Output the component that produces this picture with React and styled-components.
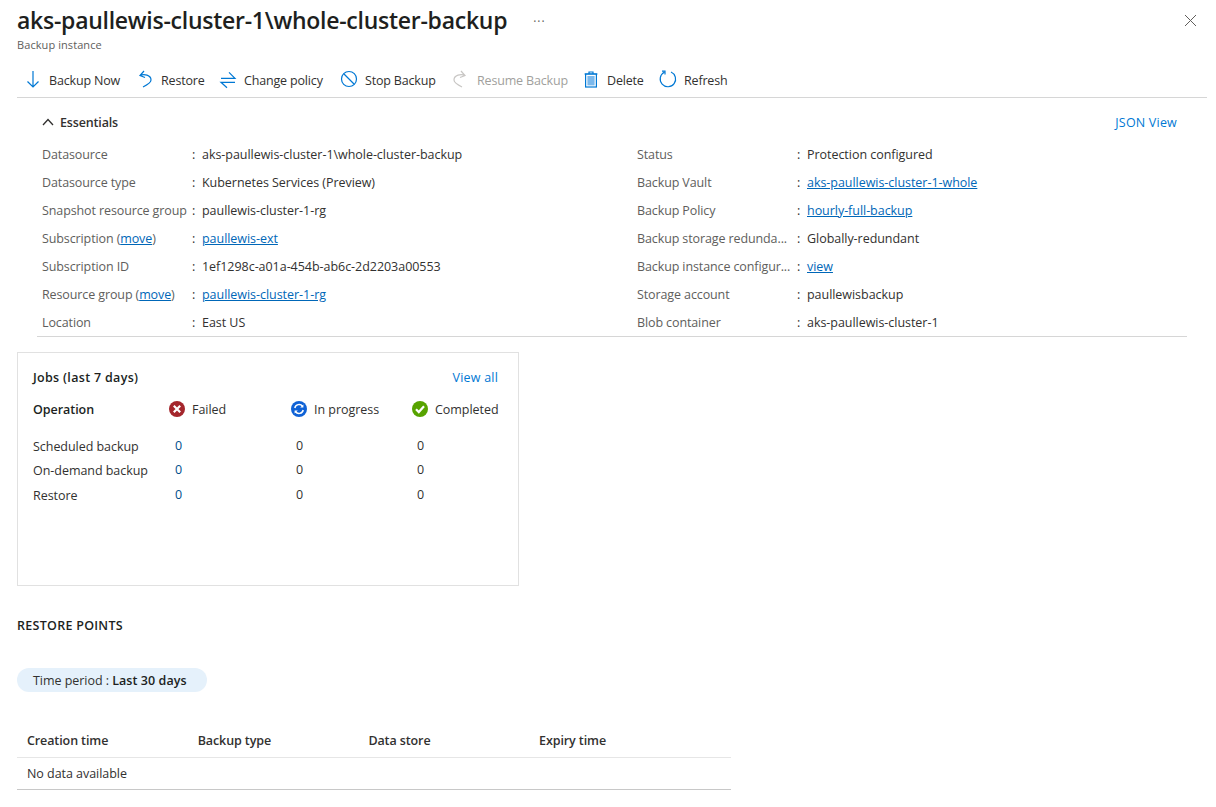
import React from 'react';
import styled, { createGlobalStyle } from 'styled-components';

const GlobalStyle = createGlobalStyle`
  html, body { margin: 0; padding: 0; background: #fff; }
  body {
    font-family: "Open Sans", "Noto Sans", "Liberation Sans", sans-serif;
    font-size: 12.5px;
    letter-spacing: -0.04px;
    color: #323130;
  }
`;

const BLUE = '#0078d4';
const LINK = '#0067b8';

const Page = styled.div`
  width: 1216px;
  height: 807px;
  overflow: hidden;
  box-sizing: border-box;
  padding: 0 9px 0 17px;
`;

const Header = styled.header`
  height: 63px;
  display: flex;
  align-items: flex-start;
`;

const TitleBlock = styled.div`
  display: flex;
  flex-direction: column;
`;

const TitleRow = styled.div`
  display: flex;
  align-items: center;
  height: 38px;
  padding-top: 2px;
  box-sizing: border-box;
`;

const Title = styled.h1`
  margin: 0;
  font-size: 23px;
  font-weight: 600;
  letter-spacing: -0.26px;
  color: #201f1e;
  white-space: nowrap;
`;

const More = styled.span`
  margin-left: 26px;
  font-size: 12px;
  letter-spacing: 1px;
  color: #605e5c;
  position: relative;
  top: 1px;
`;

const Subtitle = styled.div`
  font-size: 11px;
  letter-spacing: 0.08px;
  color: #605e5c;
  margin-top: -1px;
`;

const CloseButton = styled.button`
  margin-left: auto;
  margin-right: 10px;
  margin-top: 14px;
  padding: 0;
  border: 0;
  background: none;
  display: flex;
`;

const Toolbar = styled.nav`
  height: 35px;
  display: flex;
  align-items: center;
  border-bottom: 1px solid #d6d6d6;
  box-sizing: border-box;
  padding: 0 0 0 6px;
`;

const ToolButton = styled.div`
  display: flex;
  align-items: center;
  gap: ${(p) => p.$gap || 6}px;
  width: ${(p) => p.$width}px;
  flex: none;
  letter-spacing: -0.17px;
  color: ${(p) => (p.$disabled ? '#a19f9d' : '#323130')};
  white-space: nowrap;
`;

const Essentials = styled.section`
  padding: 0 20px;
`;

const EssentialsHead = styled.div`
  height: 42px;
  padding: 6px 10px 0 5px;
  box-sizing: border-box;
  display: flex;
  align-items: center;
  justify-content: space-between;
`;

const Collapse = styled.div`
  display: flex;
  align-items: center;
  gap: 6px;
  font-weight: 600;
  letter-spacing: -0.15px;
  color: #323130;
`;

const Details = styled.div`
  display: grid;
  grid-template-columns: 595px 1fr;
  border-bottom: 1px solid #d6d6d6;
  padding: 0 0 0 5px;
  height: 197px;
  box-sizing: border-box;
`;

const Column = styled.div`
  display: flex;
  flex-direction: column;
`;

const Row = styled.div`
  height: 28px;
  display: flex;
  align-items: center;
  white-space: nowrap;
`;

const Label = styled.div`
  width: ${(p) => p.$width}px;
  color: #605e5c;
  letter-spacing: -0.11px;
  overflow: hidden;
  flex: none;
`;

const Colon = styled.div`
  width: 10px;
  flex: none;
  color: #323130;
`;

const Value = styled.div`
  color: #323130;
`;

const Link = styled.a`
  color: ${LINK};
  text-decoration: underline;
`;

const PlainLink = styled.a`
  color: ${BLUE};
  letter-spacing: 0.2px;
`;

const JobsCard = styled.section`
  width: 502px;
  height: 234px;
  box-sizing: border-box;
  margin-top: 15px;
  border: 1px solid #e1e1e1;
  padding: 14px 20px 0 15px;
`;

const CardHead = styled.div`
  display: flex;
  justify-content: space-between;
  align-items: center;
  height: 20px;
`;

const CardTitle = styled.div`
  font-weight: 600;
  letter-spacing: 0.32px;
  color: #201f1e;
`;

const JobsGrid = styled.div`
  display: grid;
  grid-template-columns: 136px 122px 121px auto;
  margin-top: 12px;
`;

const JobsHeadCell = styled.div`
  height: 20px;
  display: flex;
  align-items: center;
  gap: 7px;
  margin-bottom: 15px;
  font-weight: ${(p) => (p.$bold ? 600 : 400)};
  color: ${(p) => (p.$bold ? '#201f1e' : '#323130')};
  white-space: nowrap;
`;

const JobsCell = styled.div`
  height: 24.5px;
  display: flex;
  align-items: center;
  white-space: nowrap;
  padding-left: ${(p) => (p.$num ? (p.$accent ? 6 : 5) : 0)}px;
  color: ${(p) => (p.$accent ? '#004e8c' : '#323130')};
  position: relative;
  top: ${(p) => (p.$num ? -1 : 0)}px;
`;

const SectionTitle = styled.h2`
  margin: 31px 0 0;
  font-size: 12.5px;
  line-height: 18px;
  font-weight: 600;
  letter-spacing: 0.28px;
  color: #201f1e;
`;

const Pill = styled.div`
  margin-top: 33px;
  width: 190px;
  height: 24px;
  border-radius: 12px;
  background: #e5f1fb;
  box-sizing: border-box;
  padding-left: 16px;
  display: flex;
  align-items: center;
  white-space: pre;
  color: #323130;

  b { font-weight: 600; letter-spacing: 0.06px; color: #201f1e; }
`;

const Table = styled.div`
  width: 714px;
  margin-top: 37px;
  border-bottom: 1px solid #c8c8c8;
`;

const TableHead = styled.div`
  display: grid;
  grid-template-columns: repeat(4, 170.7px);
  height: 29px;
  box-sizing: border-box;
  align-items: center;
  padding: 0 0 6px 10px;
  border-bottom: 1px solid #e6e6e6;
  font-weight: 600;
  letter-spacing: -0.1px;
  color: #323130;
`;

const EmptyRow = styled.div`
  height: 31px;
  display: flex;
  align-items: center;
  padding-left: 10px;
  color: #323130;
`;

const Glyph = ({ children }) => (
  <svg width="20" height="20" viewBox="0 0 20 20" fill="none" stroke={BLUE} strokeWidth="1.2">
    {children}
  </svg>
);

const CloseIcon = () => (
  <svg width="13" height="13" viewBox="0 0 13 13" stroke="#605e5c" strokeWidth="1" fill="none">
    <path d="M1 1l11 11M12 1L1 12" />
  </svg>
);

const ChevronUp = () => (
  <svg width="12" height="8" viewBox="0 0 12 8" stroke="#323130" strokeWidth="1.3" fill="none">
    <path d="M1 7l5-5.5L11 7" />
  </svg>
);

const StatusIcon = ({ color, children }) => (
  <svg width="16" height="16" viewBox="0 0 16 16">
    <circle cx="8" cy="8" r="8" fill={color} />
    {children}
  </svg>
);

const tools = [
  {
    label: 'Backup Now', width: 112,
    icon: <path d="M10 1v16M4.5 11.5L10 17l5.5-5.5" />,
  },
  {
    label: 'Restore', width: 83,
    icon: <path d="M9 1L5 5.5l5 2M5 5.5C9 3.5 16 5 16 10c0 3-4 5-8 7" />,
  },
  {
    label: 'Change policy', width: 121,
    icon: <path d="M3 8.3h14l-6-6M17 12.3H3l6 5.4" />,
  },
  {
    label: 'Stop Backup', width: 111,
    icon: <><circle cx="10" cy="9" r="7.5" /><path d="M5 4l10 10" /></>,
  },
  {
    label: 'Resume Backup', width: 131, gap: 7, disabled: true,
    icon: <path d="M11 1l4 4.5-5 2M15 5.5C11 3.5 4 5 4 10c0 3 4 5 8 7" stroke="#c8c6c4" />,
  },
  {
    label: 'Delete', width: 77,
    icon: (
      <>
        <path d="M3.5 4h13M8 4V2h4v2" />
        <rect x="4.6" y="4" width="10.8" height="13" />
        <rect x="6.4" y="6" width="7.2" height="9.4" fill="#7cb9ec" stroke="none" />
      </>
    ),
  },
  {
    label: 'Refresh', width: 80,
    icon: <path d="M13 2a7.7 7.7 0 1 1-6.8.3M4 1.2h3v3.2" />,
  },
];

const leftRows = [
  { label: 'Datasource', value: 'aks-paullewis-cluster-1\\whole-cluster-backup' },
  { label: 'Datasource type', value: 'Kubernetes Services (Preview)' },
  { label: 'Snapshot resource group', value: 'paullewis-cluster-1-rg' },
  { label: 'Subscription', move: true, value: 'paullewis-ext', link: true },
  { label: 'Subscription ID', value: '1ef1298c-a01a-454b-ab6c-2d2203a00553' },
  { label: 'Resource group', move: true, value: 'paullewis-cluster-1-rg', link: true },
  { label: 'Location', value: 'East US' },
];

const rightRows = [
  { label: 'Status', value: 'Protection configured' },
  { label: 'Backup Vault', value: 'aks-paullewis-cluster-1-whole', link: true },
  { label: 'Backup Policy', value: 'hourly-full-backup', link: true },
  { label: 'Backup storage redunda...', value: 'Globally-redundant' },
  { label: 'Backup instance configur...', value: 'view', link: true },
  { label: 'Storage account', value: 'paullewisbackup' },
  { label: 'Blob container', value: 'aks-paullewis-cluster-1' },
];

const jobRows = ['Scheduled backup', 'On-demand backup', 'Restore'];

const DetailRow = ({ row, labelWidth }) => (
  <Row>
    <Label $width={labelWidth}>
      {row.label}
      {row.move && <> (<Link>move</Link>)</>}
    </Label>
    <Colon>:</Colon>
    <Value>{row.link ? <Link>{row.value}</Link> : row.value}</Value>
  </Row>
);

export default function App() {
  return (
    <Page>
      <GlobalStyle />
      <Header>
        <TitleBlock>
          <TitleRow>
            <Title>aks-paullewis-cluster-1\whole-cluster-backup</Title>
            <More>···</More>
          </TitleRow>
          <Subtitle>Backup instance</Subtitle>
        </TitleBlock>
        <CloseButton aria-label="Close"><CloseIcon /></CloseButton>
      </Header>

      <Toolbar>
        {tools.map((t) => (
          <ToolButton key={t.label} $width={t.width} $gap={t.gap} $disabled={t.disabled}>
            <Glyph>{t.icon}</Glyph>
            {t.label}
          </ToolButton>
        ))}
      </Toolbar>

      <Essentials>
        <EssentialsHead>
          <Collapse><ChevronUp />Essentials</Collapse>
          <PlainLink>JSON View</PlainLink>
        </EssentialsHead>
        <Details>
          <Column>{leftRows.map((r) => <DetailRow key={r.label} row={r} labelWidth={150} />)}</Column>
          <Column>{rightRows.map((r) => <DetailRow key={r.label} row={r} labelWidth={160} />)}</Column>
        </Details>
      </Essentials>

      <JobsCard>
        <CardHead>
          <CardTitle>Jobs (last 7 days)</CardTitle>
          <PlainLink>View all</PlainLink>
        </CardHead>
        <JobsGrid>
          <JobsHeadCell $bold>Operation</JobsHeadCell>
          <JobsHeadCell>
            <StatusIcon color="#a4262c">
              <path d="M4.8 4.8l6.4 6.4M11.2 4.8l-6.4 6.4" stroke="#fff" strokeWidth="2.2" />
            </StatusIcon>
            Failed
          </JobsHeadCell>
          <JobsHeadCell>
            <StatusIcon color="#0f62d6">
              <path d="M3.8 7A4.3 4.3 0 0 1 11.5 5.3M12.2 9a4.3 4.3 0 0 1-7.7 1.7" stroke="#fff" strokeWidth="1.5" fill="none" />
              <path d="M12.4 3.4v3.2H9.2zM3.6 12.6V9.4h3.2z" fill="#fff" />
            </StatusIcon>
            In progress
          </JobsHeadCell>
          <JobsHeadCell>
            <StatusIcon color="#57a300">
              <path d="M4 8.3l2.8 2.8 5.2-5.8" stroke="#fff" strokeWidth="2.2" fill="none" />
            </StatusIcon>
            Completed
          </JobsHeadCell>
          {jobRows.map((name) => (
            <React.Fragment key={name}>
              <JobsCell>{name}</JobsCell>
              <JobsCell $num $accent>0</JobsCell>
              <JobsCell $num>0</JobsCell>
              <JobsCell $num>0</JobsCell>
            </React.Fragment>
          ))}
        </JobsGrid>
      </JobsCard>

      <SectionTitle>RESTORE POINTS</SectionTitle>
      <Pill>Time period : <b>Last 30 days</b></Pill>

      <Table>
        <TableHead>
          <div>Creation time</div>
          <div>Backup type</div>
          <div>Data store</div>
          <div>Expiry time</div>
        </TableHead>
        <EmptyRow>No data available</EmptyRow>
      </Table>
    </Page>
  );
}
